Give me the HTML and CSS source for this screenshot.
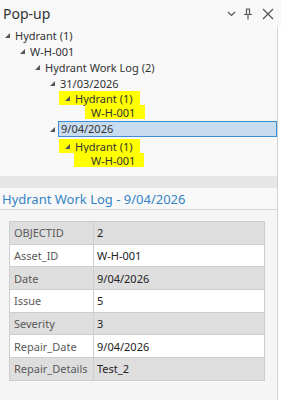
FILE: index.html
```html
<!DOCTYPE html>
<html>
<head>
<meta charset="utf-8">
<link rel="stylesheet" href="styles.css">
</head>
<body>
<div class="panel">
  <div class="header">
    <div class="title">Pop-up</div>
    <div class="tools">
      <svg class="ic-chev" width="9" height="6" viewBox="0 0 9 6"><path d="M1 1 L4.5 4.5 L8 1" fill="none" stroke="#555" stroke-width="1.2"/></svg>
      <svg class="ic-pin" width="10" height="12" viewBox="0 0 10 12"><path d="M3 1 H7 M3.5 1 V6 M6.5 1 V6 M1 6.5 H9 M5 6.5 V11.5" fill="none" stroke="#555" stroke-width="1.2"/></svg>
      <svg class="ic-x" width="12" height="12" viewBox="0 0 12 12"><path d="M1 1 L11 11 M11 1 L1 11" fill="none" stroke="#555" stroke-width="1.3"/></svg>
    </div>
  </div>
  <div class="body">
    <div class="content">
      <div class="tree">
        <div class="row l0"><span class="tri"></span><span>Hydrant (1)</span></div>
        <div class="row l1"><span class="tri"></span><span>W-H-001</span></div>
        <div class="row l2"><span class="tri"></span><span>Hydrant Work Log (2)</span></div>
        <div class="row l3"><span class="tri"></span><span>31/03/2026</span></div>
        <div class="hrow"><div class="hl hl-a"><span class="tri"></span><span>Hydrant (1)</span></div></div>
        <div class="hrow"><div class="hl hl-b">W-H-001</div></div>
        <div class="srow"><span class="tri"></span><div class="sel">9/04/2026</div></div>
        <div class="hrow"><div class="hl hl-a"><span class="tri"></span><span>Hydrant (1)</span></div></div>
        <div class="hrow"><div class="hl hl-c">W-H-001</div></div>
      </div>
      <div class="band"></div>
      <div class="rec-title">Hydrant Work Log - 9/04/2026</div>
      <div class="details">
        <table class="attrs">
          <tr class="odd"><td class="k">OBJECTID</td><td class="v">2</td></tr>
          <tr><td class="k">Asset_ID</td><td class="v">W-H-001</td></tr>
          <tr class="odd"><td class="k">Date</td><td class="v">9/04/2026</td></tr>
          <tr><td class="k">Issue</td><td class="v">5</td></tr>
          <tr class="odd"><td class="k">Severity</td><td class="v">3</td></tr>
          <tr><td class="k">Repair_Date</td><td class="v">9/04/2026</td></tr>
          <tr class="odd"><td class="k">Repair_Details</td><td class="v">Test_2</td></tr>
        </table>
      </div>
    </div>
    <div class="rail"></div>
  </div>
</div>
</body>
</html>
```
FILE: styles.css
```css
html, body {
  margin: 0;
  padding: 0;
  background: #f8f8f8;
}
body {
  font-family: "Noto Sans", "Open Sans", sans-serif;
  color: #333;
  width: 281px;
  height: 400px;
  overflow: hidden;
}
.panel {
  display: flex;
  flex-direction: column;
  height: 400px;
}
.header {
  height: 27px;
  display: flex;
  align-items: center;
  justify-content: space-between;
  flex: none;
}
.title {
  font-size: 14px;
  padding-left: 3px;
  color: #333;
  margin-top: -1px;
}
.tools {
  display: flex;
  align-items: center;
  padding-right: 7px;
}
.ic-chev { margin-right: 7px; margin-top: 1px; }
.ic-pin { margin-right: 9px; }
.body {
  flex: 1;
  display: flex;
}
.content {
  width: 277px;
  display: flex;
  flex-direction: column;
}
.rail {
  width: 3px;
  border-left: 1px solid #d2d2d2;
  background: #ffffff;
}
.tree {
  font-size: 11px;
  color: #333;
  padding-bottom: 9px;
  white-space: nowrap;
}
.row {
  height: 16px;
  display: flex;
  align-items: center;
}
.tri {
  width: 0;
  height: 0;
  border-left: 5px solid transparent;
  border-bottom: 5px solid #555;
  margin-right: 5px;
  flex: none;
}
.l0 { padding-left: 5px; }
.l1 { padding-left: 20px; }
.l2 { padding-left: 35px; }
.l3 { padding-left: 50px; }
.hrow {
  height: 14px;
  display: flex;
}
.hl {
  background: #ffff00;
  display: flex;
  align-items: center;
  color: #333;
  white-space: nowrap;
}
.hl-a {
  margin-left: 59px;
  padding-left: 6px;
  padding-right: 7px;
}
.hl-b {
  margin-left: 85px;
  padding-left: 6px;
  padding-right: 10px;
}
.hl-c {
  margin-left: 74px;
  padding-left: 17px;
  padding-right: 9px;
}
.srow {
  height: 20px;
  display: flex;
  align-items: center;
  padding-left: 50px;
}
.srow .tri { margin-right: 3px; }
.sel {
  flex: 1;
  height: 14px;
  line-height: 14px;
  border: 1px solid #3d8fd4;
  background: #c8dcef;
  padding-left: 2px;
}
.band {
  height: 12px;
  background: #e6e6e6;
}
.rec-title {
  height: 21px;
  line-height: 22px;
  font-size: 13px;
  color: #3584c6;
  padding-left: 2px;
  border-bottom: 1px solid #d6d6d6;
}
.details {
  flex: 1;
  background: #f5f5f5;
  padding: 11px 12px 0 9px;
}
.attrs {
  width: 256px;
  border-collapse: collapse;
  font-size: 11px;
}
.attrs td {
  border: 1px solid #cdcdcd;
  height: 22.7px;
  padding: 0 0 0 4px;
  box-sizing: border-box;
  background: #ffffff;
  white-space: nowrap;
}
.attrs tr.odd td { background: #dedede; }
.attrs td.k {
  width: 84px;
  color: #5a5a5a;
}
.attrs td.v {
  color: #222;
  padding-left: 3px;
}
```
